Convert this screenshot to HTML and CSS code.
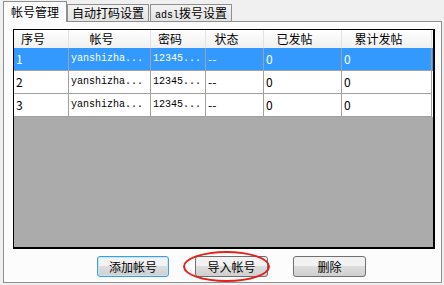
FILE: index.html
```html
<!DOCTYPE html>
<html lang="zh-CN">
<head>
    <meta charset="UTF-8">
    <title>帐号管理</title>
    <link rel="stylesheet" href="styles.css">
</head>
<body>
    <div class="tabs">
        <div class="tab active">帐号管理</div>
        <div class="tab">自动打码设置</div>
        <div class="tab"><span class="mono">adsl</span>拨号设置</div>
    </div>

    <div class="panel">
        <div class="grid">
            <div class="row head">
                <div class="cell">序号</div>
                <div class="cell">帐号</div>
                <div class="cell">密码</div>
                <div class="cell">状态</div>
                <div class="cell">已发帖</div>
                <div class="cell">累计发帖</div>
            </div>
            <div class="row selected">
                <div class="cell">1</div>
                <div class="cell mono">yanshizha...</div>
                <div class="cell mono">12345...</div>
                <div class="cell">--</div>
                <div class="cell">0</div>
                <div class="cell">0</div>
            </div>
            <div class="row">
                <div class="cell">2</div>
                <div class="cell mono">yanshizha...</div>
                <div class="cell mono">12345...</div>
                <div class="cell">--</div>
                <div class="cell">0</div>
                <div class="cell">0</div>
            </div>
            <div class="row">
                <div class="cell">3</div>
                <div class="cell mono">yanshizha...</div>
                <div class="cell mono">12345...</div>
                <div class="cell">--</div>
                <div class="cell">0</div>
                <div class="cell">0</div>
            </div>
        </div>

        <div class="buttons">
            <button class="btn focused">添加帐号</button>
            <button class="btn">导入帐号</button>
            <button class="btn">删除</button>
        </div>

        <!-- red mark drawn over the import button -->
        <div class="circle"></div>
    </div>
</body>
</html>
```

FILE: styles.css
```css
body {
    margin: 0;
    background-color: #f0f0f0;
    font-family: "Noto Sans CJK SC", "Liberation Sans", sans-serif;
    font-size: 12px;
    color: #000;
}
.mono {
    font-family: "Liberation Mono", "DejaVu Sans Mono", monospace;
    font-size: 10px;
}

/* tab strip */
.tabs {
    display: flex;
    align-items: flex-end;
    height: 20px;
    margin-top: 1px;
    padding-left: 3px;
    position: relative;
    z-index: 1;
}
.tab {
    flex-shrink: 0;
    box-sizing: border-box;
    height: 17px;
    line-height: 15px;
    padding: 0 4px;
    white-space: nowrap;
    border: 1px solid #8e8f8f;
    border-bottom: none;
    background: linear-gradient(#f3f3f3, #e3e3e3);
    margin-right: 1px;
}
.tab.active {
    height: 21px;
    line-height: 20px;
    padding: 0 7px;
    background-color: #fcfcfc;
    background-image: none;
    margin-bottom: -1px;
    margin-right: 0;
}

/* panel */
.panel {
    position: relative;
    box-sizing: border-box;
    width: 439px;
    height: 262px;
    margin-left: 3px;
    border: 1px solid #8e8f8f;
    background-color: #fcfcfc;
    padding: 7px 0 0 9px;
}

/* data grid */
.grid {
    box-sizing: border-box;
    width: 422px;
    height: 220px;
    border: 1px solid #000;
    border-right-width: 2px;
    border-bottom-width: 2px;
    background-color: #ababab;
}
.row {
    display: grid;
    grid-template-columns: 55px 82px 55px 58px 78px 90px;
    height: 23px;
    background-color: #fff;
}
.cell {
    box-sizing: border-box;
    border-right: 1px solid #a0a0a0;
    border-bottom: 1px solid #a0a0a0;
    padding-left: 2px;
    line-height: 22px;
    white-space: nowrap;
    overflow: hidden;
}
.row.head {
    height: 18px;
    background: linear-gradient(#ffffff, #f0f0f0);
}
.row.head .cell {
    border-right-color: #e2e2e2;
    border-bottom: none;
    line-height: 18px;
    text-align: center;
    padding: 0 16px 0 0;
}
.row.selected {
    background-color: #3399ff;
    color: #fff;
}

/* buttons */
.buttons {
    display: flex;
    gap: 25px;
    padding: 7px 0 0 84px;
}
.btn {
    box-sizing: border-box;
    width: 73px;
    height: 21px;
    padding: 0;
    font-family: "Noto Sans CJK SC", sans-serif;
    font-size: 12px;
    color: #000;
    border: 1px solid #707070;
    border-radius: 3px;
    background: linear-gradient(#f2f2f2 50%, #dddddd 50%, #cfcfcf);
}
.btn.focused {
    width: 72px;
    border-color: #3c9fe0;
    box-shadow: inset 0 0 0 1px #c4e5f6;
    margin-right: 1px;
}

.circle {
    position: absolute;
    left: 179px;
    top: 229px;
    width: 83px;
    height: 27px;
    border: 2px solid #e3201c;
    border-radius: 50%;
}
```
